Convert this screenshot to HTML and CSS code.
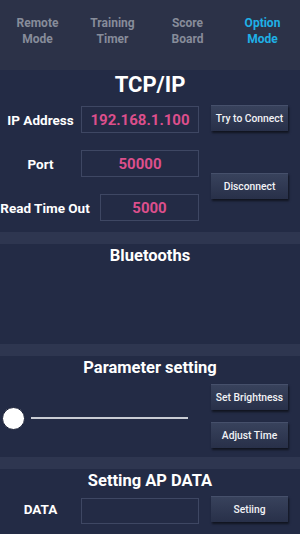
FILE: index.html
```html
<!DOCTYPE html>
<html lang="en">
<head>
    <meta charset="UTF-8">
    <meta name="viewport" content="width=device-width, initial-scale=1.0">
    <title>Option Mode</title>
    <link rel="stylesheet" href="styles.css">
</head>
<body>
    <div class="app">
        <nav class="tabs">
            <div class="tab">Remote<br>Mode</div>
            <div class="tab">Training<br>Timer</div>
            <div class="tab">Score<br>Board</div>
            <div class="tab active">Option<br>Mode</div>
        </nav>

        <!-- TCP/IP -->
        <section class="panel panel-tcp">
            <h2 class="panel-title big">TCP/IP</h2>
            <div class="tcp-body">
                <div class="fields">
                    <div class="field">
                        <span class="field-label">IP Address</span>
                        <div class="field-input">192.168.1.100</div>
                    </div>
                    <div class="field">
                        <span class="field-label">Port</span>
                        <div class="field-input">50000</div>
                    </div>
                    <div class="field field-wide">
                        <span class="field-label">Read Time Out</span>
                        <div class="field-input">5000</div>
                    </div>
                </div>
                <div class="actions actions-tcp">
                    <button class="btn">Try to Connect</button>
                    <button class="btn">Disconnect</button>
                </div>
            </div>
        </section>

        <div class="divider"></div>

        <section class="panel panel-bt">
            <h2 class="panel-title">Bluetooths</h2>
        </section>

        <div class="divider"></div>

        <!-- Parameter setting -->
        <section class="panel panel-param">
            <h2 class="panel-title">Parameter setting</h2>
            <div class="param-body">
                <div class="slider">
                    <span class="slider-thumb"></span>
                    <span class="slider-track"></span>
                </div>
                <div class="actions actions-param">
                    <button class="btn">Set Brightness</button>
                    <button class="btn">Adjust Time</button>
                </div>
            </div>
        </section>

        <div class="divider"></div>

        <section class="panel panel-ap">
            <h2 class="panel-title">Setting AP DATA</h2>
            <div class="ap-body">
                <div class="field">
                    <span class="field-label">DATA</span>
                    <div class="field-input"></div>
                </div>
                <button class="btn">Setiing</button>
            </div>
        </section>
    </div>
</body>
</html>
```

FILE: styles.css
```css
* {
    margin: 0;
    padding: 0;
    box-sizing: border-box;
}

body {
    font-family: Roboto, 'Liberation Sans', sans-serif;
    background: #232b45;
    color: #fff;
    width: 300px;
    height: 534px;
    overflow: hidden;
}

.app {
    display: flex;
    flex-direction: column;
    height: 534px;
}

/* Top tabs */
.tabs {
    height: 70px;
    background: #2c3248;
    display: flex;
    padding-top: 15px;
}

.tab {
    flex: 1;
    text-align: center;
    font-size: 12px;
    font-weight: 700;
    line-height: 16px;
    color: #878c9a;
}

.tab.active {
    color: #1fb0e6;
}

/* Panels */
.panel {
    background: #232b45;
}

.panel-title {
    text-align: center;
    font-size: 16.5px;
    font-weight: 700;
    line-height: 24px;
}

.panel-title.big {
    font-size: 22px;
    line-height: 26px;
    margin-top: 2px;
}

.divider {
    height: 12px;
    background: #2e3650;
}

.panel-tcp {
    height: 162px;
}

.panel-bt {
    height: 100px;
}

.panel-param {
    height: 101px;
}

.panel-ap {
    flex: 1;
}

/* Fields */
.tcp-body {
    display: flex;
    margin-top: 8px;
}

.fields {
    width: 199px;
    display: flex;
    flex-direction: column;
    gap: 17px;
}

.field {
    display: flex;
    align-items: center;
}

.field-label {
    width: 81px;
    text-align: center;
    font-size: 13.5px;
    font-weight: 700;
    white-space: nowrap;
}

.field-wide .field-label {
    width: 90px;
    margin-right: 10px;
}

.field-input {
    flex: 1;
    height: 27px;
    border: 1.5px solid #3e4763;
    display: flex;
    align-items: center;
    justify-content: center;
    color: #dc4f8c;
    font-size: 15px;
    font-weight: 700;
}

/* Buttons */
.actions {
    display: flex;
    flex-direction: column;
    margin-left: 12px;
}

.actions-tcp {
    margin-top: -1px;
    gap: 42px;
}

.btn {
    width: 77px;
    height: 26px;
    border: none;
    border-top: 1px solid #46506b;
    background: linear-gradient(#38425c, #283049);
    box-shadow: 1px 2px 2px rgba(0, 0, 0, 0.55);
    color: #f2f3f6;
    font-family: Roboto, 'Liberation Sans', sans-serif;
    font-size: 10.3px;
    font-weight: 500;
}

/* Parameter setting */
.param-body {
    display: flex;
    align-items: center;
    margin-top: 4px;
}

.slider {
    width: 199px;
    display: flex;
    align-items: center;
    padding-left: 2px;
    padding-top: 4px;
}

.slider-thumb {
    width: 23px;
    height: 23px;
    border-radius: 50%;
    background: #fff;
    border: 1.5px solid #1a2036;
}

.slider-track {
    width: 157px;
    height: 1.5px;
    margin-left: 6px;
    background: #c9ccd4;
}

.actions-param {
    gap: 12px;
}

/* AP data */
.ap-body {
    display: flex;
    align-items: center;
    margin-top: 1px;
}

.ap-body .field {
    width: 199px;
}

.ap-body .field-input {
    height: 26px;
    margin-top: 4px;
}

.ap-body .btn {
    margin-left: 12px;
}
```
